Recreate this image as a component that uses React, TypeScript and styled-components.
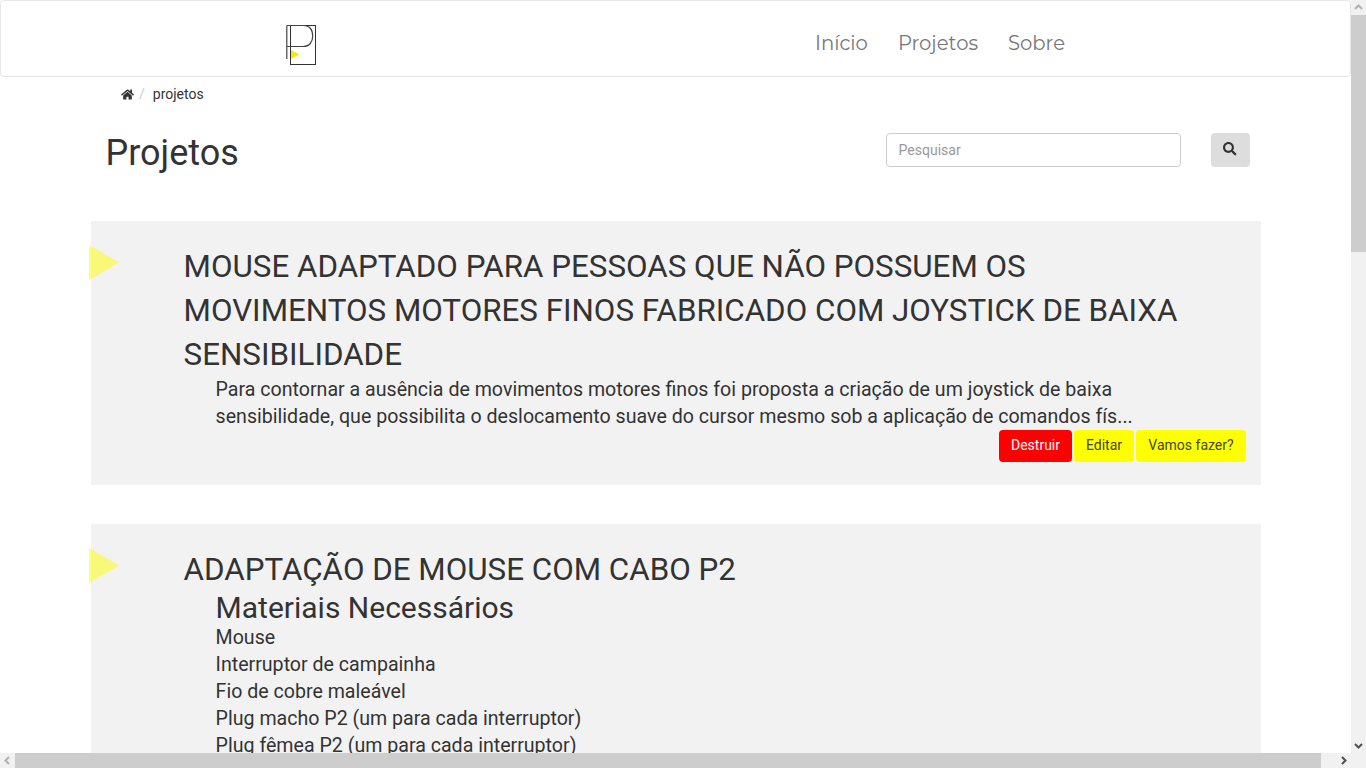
import React from "react";
import styled, { createGlobalStyle } from "styled-components";
import { FaHome, FaSearch } from "react-icons/fa";

const Global = createGlobalStyle`
  html, body { margin: 0; padding: 0; height: 768px; overflow: hidden; background: #fff; }
  body { font-family: Roboto, "Liberation Sans", sans-serif; font-size: 14px; color: #333; }
  * { box-sizing: border-box; }
`;

const Page = styled.div`
  width: 1351px;
  height: 768px;
  overflow: hidden;
`;

const Navbar = styled.nav`
  height: 77px;
  border: 1px solid #e7e7e7;
  border-radius: 4px;
  display: flex;
  padding-left: 284px;
`;

const LogoBox = styled.a`
  width: 32px;
  padding-top: 22px;
  display: block;
`;

const NavLinks = styled.ul`
  list-style: none;
  margin: 0 0 0 498px;
  padding: 0;
  display: flex;
  gap: 30px;
`;

const NavLink = styled.li`
  font-family: Montserrat, "Open Sans", sans-serif;
  font-size: 19.6px;
  line-height: 28px;
  padding-top: 28px;
  color: #777;
`;

const Crumbs = styled.ol`
  list-style: none;
  margin: 0;
  padding: 0 0 0 121px;
  height: 34px;
  display: flex;
  align-items: center;
  color: #333;
`;

const Sep = styled.span`
  color: #ccc;
  margin: 0 8px 0 5px;
`;

const HeaderRow = styled.div`
  display: flex;
  align-items: flex-start;
  padding: 22px 0 0 105.5px;
  height: 110px;
`;

const PageTitle = styled.h1`
  margin: 1px 0 0;
  width: 780.5px;
  font-size: 36px;
  font-weight: 400;
  line-height: 39px;
  color: #333;
`;

const SearchInput = styled.input`
  width: 295px;
  height: 34px;
  padding: 6px 11.6px;
  border: 1px solid #ccc;
  border-radius: 4px;
  font: 14px Roboto, sans-serif;
  color: #555;
  outline: none;
  &::placeholder { color: #999; opacity: 1; }
`;

const SearchButton = styled.button`
  width: 39px;
  height: 34px;
  margin-left: 30px;
  border: 0;
  border-radius: 4px;
  background: #ddd;
  color: #333;
  display: flex;
  align-items: center;
  justify-content: center;
  font-size: 13.5px;
  padding: 0 1px 2px 0;
`;

const Card = styled.article`
  position: relative;
  width: 1170px;
  margin: 0 0 39px 91px;
  padding: 24px 15px 23px 92.6px;
  background: #f2f2f2;
`;

const Marker = styled.svg`
  position: absolute;
  left: -2px;
  top: 23.5px;
`;

const CardTitle = styled.h2`
  margin: 0 30px -1px 0;
  font-size: 31.33px;
  font-weight: 400;
  line-height: 44px;
  color: #333;
`;

const CardBody = styled.div`
  margin: 0 30px 0 32px;
  font-size: 19.6px;
  line-height: 27px;
  color: #333;
`;

const SubTitle = styled.h3`
  margin: 0;
  font-size: 30px;
  font-weight: 400;
  line-height: 33px;
`;

const Actions = styled.div`
  display: flex;
  justify-content: flex-end;
  gap: 2px;
`;

const Action = styled.button<{ $danger?: boolean; $width: number }>`
  width: ${(p) => p.$width}px;
  height: 32px;
  padding: 0 0 2px;
  border: 0;
  border-radius: 4px;
  font: 14px Roboto, sans-serif;
  background: ${(p) => (p.$danger ? "#ff0000" : "#ffff00")};
  color: ${(p) => (p.$danger ? "#fff" : "#444")};
`;

const VTrack = styled.div`
  position: fixed;
  right: 0;
  top: 0;
  width: 15px;
  height: 753px;
  background: #f1f1f1;
  display: flex;
  flex-direction: column;
  align-items: center;
`;

const VThumb = styled.div`
  width: 15px;
  height: 237px;
  margin-top: 15px;
  background: #cdcdcd;
`;

const HTrack = styled.div`
  position: fixed;
  left: 0;
  bottom: 0;
  width: 1366px;
  height: 15px;
  background: #f1f1f1;
  display: flex;
`;

const HThumb = styled.div`
  width: 1306px;
  height: 15px;
  margin-left: 15px;
  background: #cdcdcd;
`;

const Arrow = styled.svg`
  position: fixed;
`;

const Triangle = () => (
  <Marker width="32" height="36" viewBox="0 0 32 36">
    <polygon points="0,0 30.3,17.5 0,35" fill="#ffff00" fillOpacity="0.5" />
  </Marker>
);

const Chevron = ({ d, style }: { d: string; style: React.CSSProperties }) => (
  <Arrow width="15" height="15" viewBox="0 0 15 15" style={style}>
    <path d={d} fill="none" stroke="currentColor" strokeWidth="2" />
  </Arrow>
);

export default function App() {
  return (
    <>
      <Global />
      <Page>
        <Navbar>
          <LogoBox>
            <svg width="32" height="42" viewBox="0 0 32 42">
              <rect x="5.500" y="2.500" width="25" height="39" fill="none" stroke="#333" strokeWidth="1" />
              <path d="M1.800 2.500V36M1.800 2.500H18C25.500 2.500 27.700 8 27.700 13C27.700 19 24.500 23.500 18 23.500H1.800" fill="none" stroke="#444" strokeWidth="1.200" />
              <polygon points="6,27 14.500,31.500 6,36" fill="#f5e616" />
            </svg>
          </LogoBox>
          <NavLinks>
            <NavLink>Início</NavLink>
            <NavLink>Projetos</NavLink>
            <NavLink>Sobre</NavLink>
          </NavLinks>
        </Navbar>
        <Crumbs>
          <FaHome size={13} />
          <Sep>/</Sep>
          <span>projetos</span>
        </Crumbs>
        <HeaderRow>
          <PageTitle>Projetos</PageTitle>
          <SearchInput placeholder="Pesquisar" />
          <SearchButton><FaSearch /></SearchButton>
        </HeaderRow>
        <Card>
          <Triangle />
          <CardTitle>MOUSE ADAPTADO PARA PESSOAS QUE NÃO POSSUEM OS MOVIMENTOS MOTORES FINOS FABRICADO COM JOYSTICK DE BAIXA SENSIBILIDADE</CardTitle>
          <CardBody>
            Para contornar a ausência de movimentos motores finos foi proposta a criação de um joystick de baixa sensibilidade, que possibilita o deslocamento suave do cursor mesmo sob a aplicação de comandos fís...
          </CardBody>
          <Actions>
            <Action $danger $width={73}>Destruir</Action>
            <Action $width={60}>Editar</Action>
            <Action $width={110}>Vamos fazer?</Action>
          </Actions>
        </Card>
        <Card>
          <Triangle />
          <CardTitle>ADAPTAÇÃO DE MOUSE COM CABO P2</CardTitle>
          <CardBody>
            <SubTitle>Materiais Necessários</SubTitle>
            <div>Mouse</div>
            <div>Interruptor de campainha</div>
            <div>Fio de cobre maleável</div>
            <div>Plug macho P2 (um para cada interruptor)</div>
            <div>Plug fêmea P2 (um para cada interruptor)</div>
          </CardBody>
        </Card>
      </Page>
      <VTrack><VThumb /></VTrack>
      <HTrack><HThumb /></HTrack>
      <Chevron d="M4 9L7.500 5.500L11 9" style={{ right: 0, top: 0, color: "#b0b0b0" }} />
      <Chevron d="M4 6L7.500 9.500L11 6" style={{ right: 0, top: 738, color: "#505050" }} />
      <Chevron d="M9 4L5.500 7.500L9 11" style={{ left: 0, top: 753, color: "#b0b0b0" }} />
      <Chevron d="M6 4L9.500 7.500L6 11" style={{ left: 1336, top: 753, color: "#505050" }} />
    </>
  );
}
